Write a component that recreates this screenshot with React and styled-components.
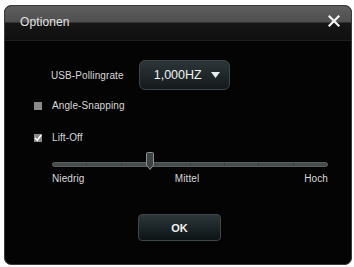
import React from 'react'
import styled, { createGlobalStyle } from 'styled-components'

const Global = createGlobalStyle`
  html, body { margin: 0; padding: 0; background: #fff; }
  body { font-family: "Liberation Sans", Arial, sans-serif; }
`;

const Window = styled.div`
  margin: 5px 0 0 4px;
  width: 348px;
  height: 260px;
  box-sizing: border-box;
  border: 1px solid #3a3a3a;
  border-radius: 7px;
  background: #040404;
  overflow: hidden;
  display: flex;
  flex-direction: column;
`;

const TitleBar = styled.div`
  height: 35px;
  flex: none;
  display: flex;
  align-items: center;
  justify-content: space-between;
  padding: 0 11px 0 15px;
  background: linear-gradient(#5e5e5e 0, #4f4f4f 16px, #161616 17px, #0f0f0f 100%);
  border-bottom: 1px solid #1e1e1e;
  box-sizing: border-box;
`;

const Title = styled.span`
  color: #e2e2e2;
  font-size: 12px;
  margin-top: -3px;
  letter-spacing: 0.1px;
`;

const Close = styled.svg`
  width: 12px;
  height: 12px;
  margin-top: -4px;
`;

const Body = styled.div`
  flex: 1;
  display: flex;
  flex-direction: column;
  padding: 19px 24px 0 29px;
`;

const PollRow = styled.div`
  display: flex;
  align-items: center;
  margin-left: 17px;
  gap: 15px;
`;

const Label = styled.span`
  color: #d8d8d8;
  font-size: 10px;
  letter-spacing: 0.1px;
`;

const Select = styled.div`
  width: 91px;
  height: 30px;
  box-sizing: border-box;
  border: 1px solid #3c4447;
  border-radius: 6px;
  background: linear-gradient(#2c3538, #141a1c);
  display: flex;
  align-items: center;
  justify-content: flex-end;
  gap: 9px;
  padding-right: 9px;
  color: #eef2f2;
  font-size: 12.5px;
`;

const CheckRow = styled.div`
  display: flex;
  align-items: center;
  gap: 10px;
  margin-top: ${p => p.$top}px;
`;

const Box = styled.div`
  width: 8px;
  height: 8px;
  background: #8a8a8a;
  display: flex;
  align-items: center;
  justify-content: center;
`;

const SliderWrap = styled.div`
  margin: 9px 0 0 18px;
  width: 276px;
  position: relative;
  height: 18px;
`;

const Track = styled.div`
  position: absolute;
  left: 0;
  right: 0;
  top: 10px;
  height: 5px;
  border-radius: 3px;
  background: #474c4d;
  border: 1px solid #5a5f60;
  box-sizing: border-box;
  display: flex;
`;

const Segment = styled.div`
  flex: 1;
  border-right: 1px solid #383c3d;
  &:last-child { border-right: none; }
`;

const Thumb = styled.svg`
  position: absolute;
  left: 94px;
  top: 0;
  width: 8px;
  height: 18px;
`;

const Scale = styled.div`
  margin-left: 18px;
  width: 276px;
  display: grid;
  grid-template-columns: 1fr auto 1fr;
  margin-top: 3px;
`;

const ScaleLabel = styled(Label)`
  justify-self: ${p => p.$align};
  margin-right: ${p => p.$shift || 0}px;
`;

const OkButton = styled.button`
  align-self: flex-start;
  margin: 30px 0 0 104px;
  width: 83px;
  height: 27px;
  border: 1px solid #3e4649;
  border-radius: 4px;
  background: linear-gradient(#2c373a, #0c1315);
  color: #f2f2f2;
  font-family: "Liberation Sans", Arial, sans-serif;
  font-weight: bold;
  font-size: 11px;
  padding: 0;
`;

export default function App() {
  return (
    <>
      <Global />
      <Window>
        <TitleBar>
          <Title>Optionen</Title>
          <Close viewBox="0 0 12 12">
            <path d="M1.5 1.5 L10.5 10.5 M10.5 1.5 L1.5 10.5" stroke="#f4f4f4" strokeWidth="2.2" strokeLinecap="square" />
          </Close>
        </TitleBar>
        <Body>
          <PollRow>
            <Label>USB-Pollingrate</Label>
            <Select>
              <span>1,000HZ</span>
              <svg width="9" height="6" viewBox="0 0 9 6"><path d="M0 0 H9 L4.5 6 Z" fill="#e8eef0" /></svg>
            </Select>
          </PollRow>
          <CheckRow $top={10}>
            <Box />
            <Label>Angle-Snapping</Label>
          </CheckRow>
          <CheckRow $top={21}>
            <Box>
              <svg width="8" height="8" viewBox="0 0 8 8"><path d="M1 4 L3.3 6.3 L7.2 1" stroke="#fff" strokeWidth="1.6" fill="none" /></svg>
            </Box>
            <Label>Lift-Off</Label>
          </CheckRow>
          <SliderWrap>
            <Track>
              {Array.from({ length: 8 }).map((_, i) => <Segment key={i} />)}
            </Track>
            <Thumb viewBox="0 0 8 18">
              <path d="M1.5 0.5 H6.5 Q7.5 0.5 7.5 1.5 V13 L4 17.5 L0.5 13 V1.5 Q0.5 0.5 1.5 0.5 Z" fill="#3d4244" stroke="#8a9092" strokeWidth="1" />
            </Thumb>
          </SliderWrap>
          <Scale>
            <ScaleLabel $align="start">Niedrig</ScaleLabel>
            <ScaleLabel $align="center" $shift={6}>Mittel</ScaleLabel>
            <ScaleLabel $align="end">Hoch</ScaleLabel>
          </Scale>
          <OkButton>OK</OkButton>
        </Body>
      </Window>
    </>
  )
}
